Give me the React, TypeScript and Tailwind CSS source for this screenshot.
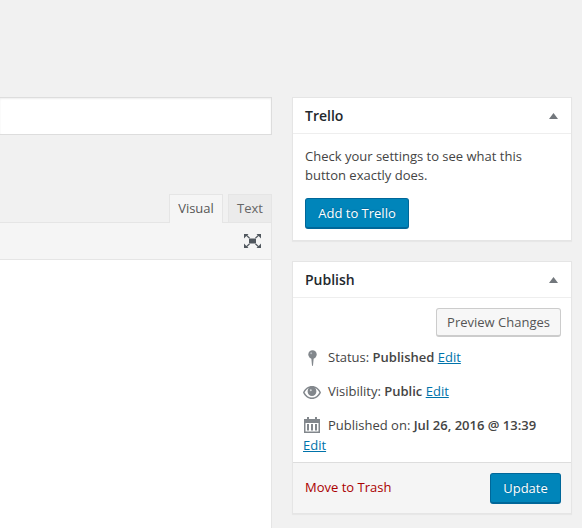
import React from "react";

const PrimaryButton = ({ children, className = "" }: { children: React.ReactNode; className?: string }) => (
  <button className={`h-[31px] rounded-[3px] border border-[#006799] border-b-2 bg-[#0085ba] text-[13px] leading-[26px] text-white [text-shadow:0_-1px_1px_#006799] ${className}`}>
    {children}
  </button>
);

const BoxHeader = ({ title }: { title: string }) => (
  <div className="flex h-[36px] items-center justify-between border-b border-[#eeeeee] pl-3 pr-[13px]">
    <span className="text-[14px] font-semibold text-[#23282d]">{title}</span>
    <svg width="9" height="6" viewBox="0 0 9 6"><path d="M4.500 0 L9 6 L0 6 Z" fill="#72777c" /></svg>
  </div>
);

const Link = ({ children }: { children: React.ReactNode }) => (
  <a className="text-[#0073aa] underline">{children}</a>
);

export default function App() {
  return (
    <div className="flex h-[528px] w-[582px] gap-5 overflow-hidden bg-[#f1f1f1] pt-[97px] font-['Open_Sans',sans-serif] text-[13px] text-[#444444]">
      <div className="flex w-[272px] shrink-0 flex-col">
        <div className="h-[38px] border border-l-0 border-[#dddddd] bg-white shadow-[inset_0_1px_2px_rgba(0,0,0,0.07)]" />
        <div className="-mb-px mt-[59px] flex h-[29px] items-start justify-end gap-[5px]">
          <div className="z-10 flex h-[29px] w-[54px] items-center justify-center border border-b-0 border-[#e5e5e5] bg-[#f5f5f5] text-[#555555]">Visual</div>
          <div className="flex h-[29px] w-[44px] items-center justify-center border border-[#e5e5e5] bg-[#ebebeb] text-[#666666]">Text</div>
        </div>
        <div className="flex h-[38px] items-center justify-end border-y border-r border-[#e5e5e5] bg-[#f5f5f5] pr-[10px]">
          <svg width="17" height="14" viewBox="0 0 17 14" fill="#50575e">
            <rect x="5" y="4.500" width="7" height="5" />
            <path d="M0 0h4.500L3.300 1.200 6 3.800 5 4.500 2.300 2.100 0 4.500z" />
            <path d="M17 0h-4.500l1.200 1.200L11 3.800l1 .7 2.700-2.400L17 4.500z" />
            <path d="M0 14h4.500l-1.200-1.200L6 10.200l-1-.7-2.700 2.400L0 9.500z" />
            <path d="M17 14h-4.500l1.200-1.200-2.700-2.600 1-.7 2.700 2.400L17 9.500z" />
          </svg>
        </div>
        <div className="flex-1 border-r border-[#e5e5e5] bg-white" />
      </div>

      <div className="flex w-[280px] shrink-0 flex-col gap-5">
        <div className="h-[144px] border border-[#e5e5e5] bg-white shadow-[0_1px_1px_rgba(0,0,0,0.04)]">
          <BoxHeader title="Trello" />
          <div className="px-3 pt-[13px]">
            <p className="text-[13px] leading-[19px]">Check your settings to see what this button exactly does.</p>
            <PrimaryButton className="mt-[13px] w-[104px]">Add to Trello</PrimaryButton>
          </div>
        </div>

        <div className="flex h-[253px] flex-col border border-[#e5e5e5] bg-white shadow-[0_1px_1px_rgba(0,0,0,0.04)]">
          <BoxHeader title="Publish" />
          <div className="flex-1">
            <div className="flex justify-end pr-[10px] pt-[10px]">
              <button className="h-[29px] w-[125px] rounded-[3px] border border-[#cccccc] border-b-2 bg-[#f7f7f7] pt-px text-[13px] text-[#555555]">Preview Changes</button>
            </div>
            <div className="mt-[12px] flex h-[18px] items-center pl-[3px]">
              <svg className="ml-3" width="9" height="16" viewBox="0 0 9 16">
                <circle cx="4.500" cy="4.500" r="4.200" fill="#82878c" />
                <path d="M3.300 8h2.400L5 15.500c0 .6-1 .6-1 0z" fill="#82878c" />
                <circle cx="3.200" cy="3.200" r="1" fill="#b4b9be" />
              </svg>
              <span className="ml-[11px]">Status: <b className="font-semibold">Published</b> <Link>Edit</Link></span>
            </div>
            <div className="mt-[16px] flex h-[18px] items-center pl-[10px]">
              <svg width="18" height="13" viewBox="0 0 18 13">
                <path fillRule="evenodd" fill="#82878c" d="M9 0C5 0 1.800 2.500 0 6.500 1.800 10.500 5 13 9 13s7.200-2.500 9-6.500C16.200 2.500 13 0 9 0zM1.600 6.500C2.700 4.300 4.200 2.800 5.800 2 5 3 4.600 4.100 4.600 5.500c0 2.500 2 4.500 4.400 4.500s4.400-2 4.400-4.500c0-1.400-.4-2.500-1.200-3.500 1.600.8 3.100 2.300 4.200 4.500C14.800 9.500 12.300 11.500 9 11.500S3.200 9.500 1.600 6.500z" />
                <circle cx="9" cy="5.500" r="2.800" fill="#82878c" />
                <circle cx="7.800" cy="4.300" r="1" fill="#d5d8da" />
              </svg>
              <span className="ml-[7px]">Visibility: <b className="font-semibold">Public</b> <Link>Edit</Link></span>
            </div>
            <div className="mt-[15px] pl-[11px] leading-[20px]">
              <div className="flex h-[18px] items-center">
                <svg width="16" height="16" viewBox="0 0 16 16" fill="#82878c">
                  <path fillRule="evenodd" d="M0 2h3V0h2v2h6V0h2v2h3v14H0zM1.500 6v8.500h13V6z" />
                  <rect x="3" y="7" width="2" height="6.500" />
                  <rect x="7" y="7" width="2" height="6.500" />
                  <rect x="11" y="7" width="2" height="6.500" />
                </svg>
                <span className="ml-[8px]">Published on: <b className="font-semibold">Jul 26, 2016 @ 13:39</b></span>
              </div>
              <div className="-ml-px mt-[1px]"><Link>Edit</Link></div>
            </div>
          </div>
          <div className="flex h-[51px] items-center justify-between border-t border-[#dddddd] bg-[#f5f5f5] pl-3 pr-[10px]">
            <a className="text-[#a00]">Move to Trash</a>
            <PrimaryButton className="w-[71px]">Update</PrimaryButton>
          </div>
        </div>
      </div>
    </div>
  );
}
